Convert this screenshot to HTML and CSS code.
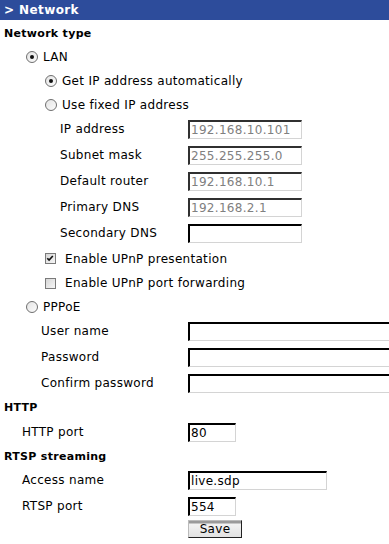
FILE: index.html
```html
<!DOCTYPE html>
<html>
<head>
<meta charset="utf-8">
<link rel="stylesheet" href="styles.css">
</head>
<body>
<div class="header">&gt; Network</div>
<div class="form">
  <div class="row sec h24">Network type</div>
  <div class="row opt h24 in27"><span class="radio on"></span><span class="otext">LAN</span></div>
  <div class="row opt h24 in46"><span class="radio on"></span><span class="otext">Get IP address automatically</span></div>
  <div class="row opt h23 in46"><span class="radio"></span><span class="otext">Use fixed IP address</span></div>
  <div class="field in60"><span class="lbl">IP address</span><input class="txt w114 dis" value="192.168.10.101" disabled></div>
  <div class="field in60"><span class="lbl">Subnet mask</span><input class="txt w114 dis" value="255.255.255.0" disabled></div>
  <div class="field in60"><span class="lbl">Default router</span><input class="txt w114 dis" value="192.168.10.1" disabled></div>
  <div class="field in60"><span class="lbl">Primary DNS</span><input class="txt w114 dis" value="192.168.2.1" disabled></div>
  <div class="field in60"><span class="lbl">Secondary DNS</span><input class="txt w114" value=""></div>
  <div class="row opt h25 in45"><span class="check on"><svg viewBox="0 0 11 11" width="11" height="11"><path d="M2.5 5.2 L4.5 7.3 L8.6 2.8" fill="none" stroke="#111" stroke-width="1.8"/></svg></span><span class="ctext">Enable UPnP presentation</span></div>
  <div class="row opt h24 in45"><span class="check"></span><span class="ctext">Enable UPnP port forwarding</span></div>
  <div class="row opt h23 in27"><span class="radio"></span><span class="otext">PPPoE</span></div>
  <div class="field in41"><span class="lbl">User name</span><span class="clip"><input class="txt w260" value=""></span></div>
  <div class="field in41"><span class="lbl">Password</span><span class="clip"><input class="txt w260" type="password" value=""></span></div>
  <div class="field in41"><span class="lbl">Confirm password</span><span class="clip"><input class="txt w260" type="password" value=""></span></div>
  <div class="row sec h23">HTTP</div>
  <div class="field in22"><span class="lbl">HTTP port</span><input class="txt w48" value="80"></div>
  <div class="row sec h22">RTSP streaming</div>
  <div class="field in22"><span class="lbl">Access name</span><input class="txt w139" value="live.sdp"></div>
  <div class="field in22"><span class="lbl">RTSP port</span><input class="txt w48" value="554"></div>
  <div class="field btnrow"><span class="lbl"></span><button class="save">Save</button></div>
</div>
</body>
</html>
```
FILE: styles.css
```css
html, body {
  margin: 0;
  padding: 0;
  background: #fff;
  overflow: hidden;
}
body {
  font-family: "DejaVu Sans", Verdana, sans-serif;
  font-size: 12px;
  letter-spacing: 0.3px;
  color: #000;
  width: 389px;
}
.header {
  height: 20px;
  line-height: 20px;
  background: #2d4c9b;
  color: #fff;
  font-weight: bold;
  font-size: 12px;
  letter-spacing: 0.4px;
  padding-left: 4px;
}
.form {
  padding-top: 1px;
}
.row {
  display: flex;
  align-items: center;
}
.sec {
  font-weight: bold;
  font-size: 11px;
  letter-spacing: 0.3px;
  padding-left: 4px;
}
.h22 { height: 22px; }
.h23 { height: 23px; }
.h24 { height: 24px; }
.h25 { height: 25px; }
.in27 { padding-left: 26px; }
.in46 { padding-left: 45px; }
.in45 { padding-left: 45px; }
.in60 { padding-left: 60px; }
.in41 { padding-left: 41px; }
.in22 { padding-left: 22px; }

.radio {
  width: 10px;
  height: 10px;
  border: 1px solid #6f6f6f;
  border-radius: 50%;
  background: linear-gradient(135deg, #e4e4e4, #fbfbfb);
  position: relative;
  flex: none;
}
.radio.on::after {
  content: "";
  position: absolute;
  left: 3px;
  top: 3px;
  width: 4px;
  height: 4px;
  border-radius: 50%;
  background: #111;
}
.otext { margin-left: 5px; }
.check {
  width: 9px;
  height: 9px;
  border: 1px solid #7a7a7a;
  background: linear-gradient(135deg, #d6d6d6, #f6f6f6);
  flex: none;
  display: flex;
}
.check svg { margin: -1px 0 0 -1px; }
.ctext { margin-left: 9px; }

.field {
  display: grid;
  grid-template-columns: auto 1fr;
  height: 26px;
  align-items: center;
}
.field.in60 { grid-template-columns: 128px 1fr; }
.field.in41 { grid-template-columns: 147px 1fr; }
.field.in22 { grid-template-columns: 166px 1fr; }
.field.btnrow { grid-template-columns: 188px 1fr; height: 20px; }
.clip {
  display: block;
  width: 201px;
  height: 19px;
  overflow: hidden;
}
.txt {
  box-sizing: border-box;
  display: block;
  height: 19px;
  border-style: solid;
  border-color: #000 #d4d4d4 #d4d4d4 #000;
  border-width: 2px 1px 1px 2px;
  padding: 0 1px;
  margin: 0;
  font-family: "DejaVu Sans", Verdana, sans-serif;
  font-size: 12px;
  letter-spacing: 0.3px;
  color: #000;
  background: #fff;
  outline: none;
}
.txt.dis { color: #808080; border-color: #303030 #d4d4d4 #d4d4d4 #303030; }
.w114 { width: 114px; }
.w260 { width: 260px; }
.w139 { width: 139px; }
.w48 { width: 48px; }
.save {
  box-sizing: border-box;
  display: block;
  width: 54px;
  height: 18px;
  padding: 0;
  margin: 0;
  font-family: "DejaVu Sans", Verdana, sans-serif;
  font-size: 12px;
  letter-spacing: 0.3px;
  color: #000;
  border: 1px solid #222;
  border-top-color: #bbb;
  border-left-color: #bbb;
  background: linear-gradient(#9a9a9a 0, #9a9a9a 2px, #f2f2f2 3px, #e2e2e2 100%);
  line-height: 14px;
}
```
